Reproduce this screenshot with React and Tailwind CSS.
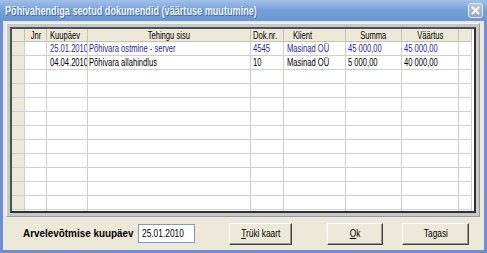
import React from 'react';

// Column widths of the document grid (indicator, Jnr, Kuupäev, Tehingu sisu, Dok.nr., Klient, Summa, Väärtus, filler)
const cols = 'grid-cols-[13px_22px_41px_163px_33px_62px_56px_57px_13px]';

const rows = [
  { date: '25.01.2010', text: 'Põhivara ostmine - server', doc: '4545', client: 'Masinad OÜ', sum: '45 000,00', value: '45 000,00', blue: true },
  { date: '04.04.2010', text: 'Põhivara allahindlus', doc: '10', client: 'Masinad OÜ', sum: '5 000,00', value: '40 000,00' },
];

// the old screenshot text is narrow, squeeze it a bit
function Sq({ children, className = '' }) {
  return <span className={`inline-block whitespace-nowrap scale-x-[0.76] ${className}`}>{children}</span>;
}

function HeadCell({ children, align = 'center', pad = '' }) {
  return (
    <div className={`h-[13px] bg-[#ece9d8] border-r border-b border-[#c4c2b8] flex items-center overflow-hidden ${align === 'center' ? 'justify-center' : 'justify-start'} ${pad}`}>
      {children && <Sq className={align === 'center' ? 'origin-center' : 'origin-left'}>{children}</Sq>}
    </div>
  );
}

function Cell({ children, pad = 'pl-[2px]' }) {
  return (
    <div className={`h-[14px] bg-white border-r border-b border-[#cfcfcf] flex items-center overflow-hidden ${pad}`}>
      {children && <Sq className="origin-left">{children}</Sq>}
    </div>
  );
}

function Btn({ children, className = '' }) {
  return (
    <button className={`h-[22px] bg-[#ece9d8] border border-t-white border-l-white border-r-[#404040] border-b-[#404040] shadow-[inset_-1px_-1px_0_#9a978c] text-[11px] text-black flex items-center justify-center ${className}`}>
      <Sq className="origin-center">{children}</Sq>
    </button>
  );
}

export default function App() {
  const blank = Array.from({ length: 11 });

  return (
    <div className="w-[487px] h-[253px] bg-[#6a8ed8] flex flex-col overflow-hidden font-['Liberation_Sans',Arial,sans-serif] text-[10px] text-black select-none">
      {/* Title bar */}
      <div className="h-[21px] shrink-0 bg-gradient-to-b from-[#a3c0ea] via-[#74a0d8] to-[#6a97d4] flex items-center pl-[5px] pr-[4px]">
        <div className="flex-1 overflow-hidden">
          <Sq className="origin-left text-[12px] font-bold text-[#eef3fc] [text-shadow:1px_1px_0_#45679f]">
            Põhivahendiga seotud dokumendid (väärtuse muutumine)
          </Sq>
        </div>
        <div className="w-[15px] h-[15px] rounded-[3px] border border-[#e8eef8] bg-gradient-to-b from-[#bcc6dc] to-[#97a4c4] flex items-center justify-center">
          <svg width="9" height="9" viewBox="0 0 9 9">
            <path d="M1.5 1.5 L7.5 7.5 M7.5 1.5 L1.5 7.5" stroke="#ffffff" strokeWidth="1.8" strokeLinecap="square" />
          </svg>
        </div>
      </div>

      {/* Client area */}
      <div className="flex-1 mx-[3px] mb-[3px] bg-[#ece9d8] flex flex-col">
        {/* Grid panel */}
        <div className="mt-[2px] ml-[3px] mr-[4px] h-[194px] border border-t-[#f4f4f4] border-l-[#f4f4f4] border-r-[#9a9a9a] border-b-[#9a9a9a] bg-[#c8c8c8] p-[3px]">
          <div className="h-full border-2 border-t-[#505050] border-l-[#505050] border-r-[#303030] border-b-[#303030] bg-white overflow-hidden">
            <div className={`grid ${cols}`}>
              <HeadCell />
              <HeadCell>Jnr</HeadCell>
              <HeadCell align="left" pad="pl-[3px]">Kuupäev</HeadCell>
              <HeadCell>Tehingu sisu</HeadCell>
              <HeadCell align="left" pad="pl-[2px]">Dok.nr.</HeadCell>
              <HeadCell align="left" pad="pl-[9px]">Klient</HeadCell>
              <HeadCell>Summa</HeadCell>
              <HeadCell>Väärtus</HeadCell>
              <HeadCell />

              {rows.map((r, i) => (
                <React.Fragment key={i}>
                  <div className="h-[14px] bg-[#ebe9da] border-r border-b border-[#cfcfcf]" />
                  <Cell />
                  <Cell pad="pl-[3px]"><span className={r.blue ? 'text-[#1f1fb4]' : ''}>{r.date}</span></Cell>
                  <Cell pad="pl-[1px]"><span className={r.blue ? 'text-[#1f1fb4]' : ''}>{r.text}</span></Cell>
                  <Cell><span className={r.blue ? 'text-[#1f1fb4]' : ''}>{r.doc}</span></Cell>
                  <Cell pad="pl-[3px]"><span className={r.blue ? 'text-[#1f1fb4]' : ''}>{r.client}</span></Cell>
                  <Cell><span className={r.blue ? 'text-[#1f1fb4]' : ''}>{r.sum}</span></Cell>
                  <Cell><span className={r.blue ? 'text-[#1f1fb4]' : ''}>{r.value}</span></Cell>
                  <Cell />
                </React.Fragment>
              ))}

              {blank.map((_, i) => (
                <React.Fragment key={'b' + i}>
                  <div className="h-[14px] bg-[#ebe9da] border-r border-b border-[#cfcfcf]" />
                  <Cell />
                  <Cell />
                  <Cell />
                  <Cell />
                  <Cell />
                  <Cell />
                  <Cell />
                  <Cell />
                </React.Fragment>
              ))}
            </div>
          </div>
        </div>

        {/* Bottom bar */}
        <div className="flex-1 flex items-center pl-[20px]">
          <div className="w-[115px] overflow-visible">
            <span className="inline-block whitespace-nowrap origin-left text-[11px] font-bold scale-x-[0.9]">Arvelevõtmise kuupäev</span>
          </div>
          <div className="w-[57px] h-[19px] bg-white border border-[#7f9db9] flex items-center pl-[3px] overflow-hidden">
            <Sq className="origin-left text-[11px]">25.01.2010</Sq>
          </div>
          <Btn className="ml-[34px] w-[63px]"><span className="underline">T</span>rüki kaart</Btn>
          <Btn className="ml-[35px] w-[56px]"><span className="underline">O</span>k</Btn>
          <Btn className="ml-[19px] w-[67px]">Tagasi</Btn>
        </div>
      </div>
    </div>
  );
}
